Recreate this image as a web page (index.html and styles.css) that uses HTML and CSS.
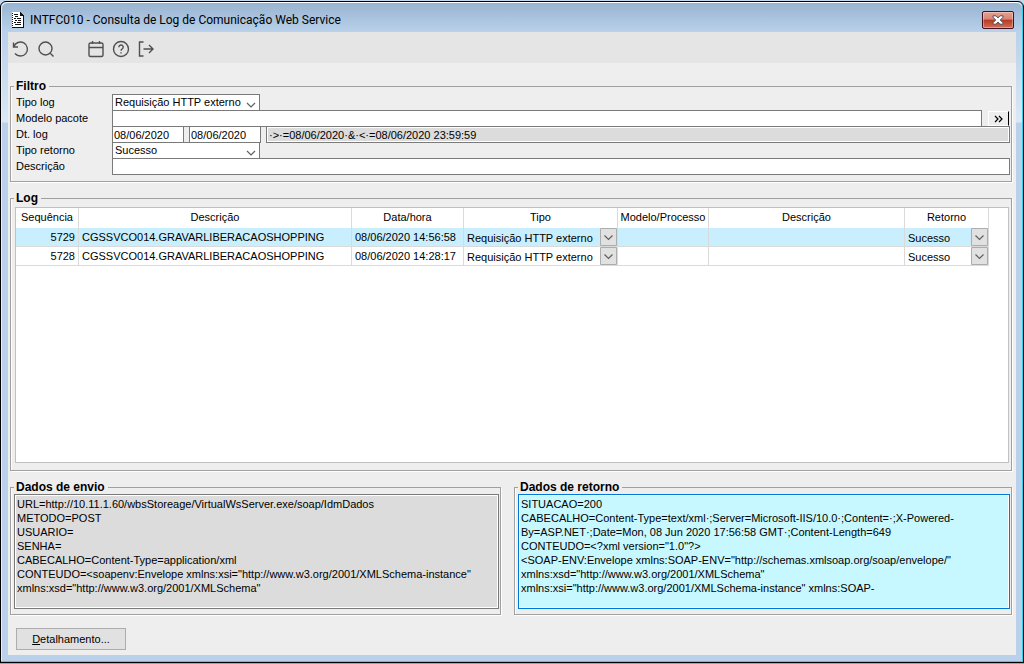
FILE: index.html
```html
<!DOCTYPE html>
<html lang="pt-BR">
<head>
    <meta charset="UTF-8">
    <meta name="viewport" content="width=device-width, initial-scale=1.0">
    <title>INTFC010 - Consulta de Log de Comunicação Web Service</title>
    <link rel="stylesheet" href="styles.css">
</head>
<body>
    <div class="window">
        <header class="titlebar">
            <svg class="app-icon" viewBox="0 0 12 16" width="12" height="16" shape-rendering="crispEdges">
                <path d="M0 0h9v1h1v1h1v1h1v13H0z" fill="#111"/>
                <path d="M0 0h8v4h3v11H0z" fill="#fff"/>
                <path d="M0 1h1v1H0zM0 3h1v1H0zM0 5h1v1H0zM0 7h1v1H0zM0 9h1v1H0zM0 11h1v1H0zM0 13h1v1H0zM2 2h4v1H2zM3 4h3v1H3zM2 6h2v1H2zM5 6h4v1H5zM3 8h2v1H3zM6 8h3v1H6zM2 10h2v1H2zM5 10h4v1H5zM3 12h6v1H3z" fill="#111"/>
            </svg>
            <h1>INTFC010 - Consulta de Log de Comunicação Web Service</h1>
            <button type="button" class="close" aria-label="Fechar">
                <svg viewBox="0 0 12 10" width="12" height="10">
                    <path d="M1 .8h3l2 2.2L8 .8h3v1.400L8.300 5 11 7.800v1.400H8L6 7 4 9.200H1V7.800L3.700 5 1 2.200z" fill="#fff" stroke="#4e5260" stroke-width="1"/>
                </svg>
            </button>
        </header>

        <main class="client">
            <!-- Barra de ferramentas -->
            <nav class="toolbar">
                <button type="button" aria-label="Atualizar">
                    <svg viewBox="0 0 18 18"><path d="M1.500 2.500v4.500h4.500M1.800 6.800A7 7 0 1 1 3 13.500"/></svg>
                </button>
                <button type="button" aria-label="Pesquisar">
                    <svg viewBox="0 0 18 18"><circle cx="8.500" cy="8.500" r="6.500"/><path d="M13.200 13.200l3.300 3.300"/></svg>
                </button>
                <span class="separator"></span>
                <button type="button" aria-label="Calendário">
                    <svg viewBox="0 0 18 18"><rect x="2" y="3" width="14" height="13.500" rx="1.500"/><path d="M2 7.500h14M5.500 1v3M12.500 1v3"/></svg>
                </button>
                <button type="button" aria-label="Ajuda">
                    <svg viewBox="0 0 18 18"><circle cx="9" cy="9" r="7.500"/><path d="M6.800 7.200a2.200 2.200 0 1 1 3.200 2c-.7.400-1 .7-1 1.600M9 12.200v1.200"/></svg>
                </button>
                <button type="button" aria-label="Sair">
                    <svg viewBox="0 0 18 18"><path d="M6.500 2h-4v14h4M6.500 9h9.500M12 5l4 4-4 4"/></svg>
                </button>
            </nav>

            <!-- Filtro -->
            <fieldset class="group filter">
                <legend>Filtro</legend>
                <label for="tipo-log">Tipo log</label>
                <div class="line">
                    <select id="tipo-log" class="field combo">
                        <option>Requisição HTTP externo</option>
                    </select>
                </div>
                <label for="modelo">Modelo pacote</label>
                <div class="line">
                    <input type="text" id="modelo" class="field grow">
                    <button type="button" class="more" aria-label="Selecionar">
                        <svg viewBox="0 0 9 8" width="9" height="8"><path d="M1 1l3 3-3 3M5 1l3 3-3 3"/></svg>
                    </button>
                </div>
                <label for="dt-inicio">Dt. log</label>
                <div class="line dates">
                    <input type="text" id="dt-inicio" class="field date" value="08/06/2020">
                    <input type="text" class="field date" value="08/06/2020" aria-label="Dt. log final">
                    <input type="text" class="field grow expression" value="·&gt;·=08/06/2020·&amp;·&lt;·=08/06/2020 23:59:59" aria-label="Expressão" readonly>
                </div>
                <label for="tipo-retorno">Tipo retorno</label>
                <div class="line">
                    <select id="tipo-retorno" class="field combo">
                        <option>Sucesso</option>
                    </select>
                </div>
                <label for="descricao">Descrição</label>
                <div class="line">
                    <input type="text" id="descricao" class="field grow">
                </div>
            </fieldset>

            <!-- Log -->
            <fieldset class="group log">
                <legend>Log</legend>
                <div class="grid">
                    <table>
                        <colgroup>
                            <col class="c-seq"><col class="c-name"><col class="c-date"><col class="c-type">
                            <col class="c-model"><col class="c-desc"><col class="c-ret">
                        </colgroup>
                        <thead>
                            <tr>
                                <th>Sequência</th>
                                <th>Descrição</th>
                                <th>Data/hora</th>
                                <th>Tipo</th>
                                <th>Modelo/Processo</th>
                                <th>Descrição</th>
                                <th>Retorno</th>
                            </tr>
                        </thead>
                        <tbody>
                            <tr class="selected">
                                <td class="num">5729</td>
                                <td>CGSSVCO014.GRAVARLIBERACAOSHOPPING</td>
                                <td>08/06/2020 14:56:58</td>
                                <td class="pick"><select aria-label="Tipo"><option>Requisição HTTP externo</option></select></td>
                                <td></td>
                                <td></td>
                                <td class="pick"><select aria-label="Retorno"><option>Sucesso</option></select></td>
                            </tr>
                            <tr>
                                <td class="num">5728</td>
                                <td>CGSSVCO014.GRAVARLIBERACAOSHOPPING</td>
                                <td>08/06/2020 14:28:17</td>
                                <td class="pick"><select aria-label="Tipo"><option>Requisição HTTP externo</option></select></td>
                                <td></td>
                                <td></td>
                                <td class="pick"><select aria-label="Retorno"><option>Sucesso</option></select></td>
                            </tr>
                        </tbody>
                    </table>
                </div>
            </fieldset>

            <!-- Dados enviados e recebidos -->
            <div class="payloads">
                <fieldset class="group">
                    <legend>Dados de envio</legend>
                    <textarea class="payload" aria-label="Dados de envio" readonly>URL=http://10.11.1.60/wbsStoreage/VirtualWsServer.exe/soap/IdmDados
METODO=POST
USUARIO=
SENHA=
CABECALHO=Content-Type=application/xml
CONTEUDO=&lt;soapenv:Envelope xmlns:xsi="http://www.w3.org/2001/XMLSchema-instance"
xmlns:xsd="http://www.w3.org/2001/XMLSchema"</textarea>
                </fieldset>
                <fieldset class="group">
                    <legend>Dados de retorno</legend>
                    <textarea class="payload active" aria-label="Dados de retorno">SITUACAO=200
CABECALHO=Content-Type=text/xml·;Server=Microsoft-IIS/10.0·;Content=·;X-Powered-
By=ASP.NET·;Date=Mon, 08 Jun 2020 17:56:58 GMT·;Content-Length=649
CONTEUDO=&lt;?xml version="1.0"?&gt;
&lt;SOAP-ENV:Envelope xmlns:SOAP-ENV="http://schemas.xmlsoap.org/soap/envelope/"
xmlns:xsd="http://www.w3.org/2001/XMLSchema"
xmlns:xsi="http://www.w3.org/2001/XMLSchema-instance" xmlns:SOAP-</textarea>
                </fieldset>
            </div>

            <footer class="actions">
                <button type="button" class="btn"><span class="key">D</span>etalhamento...</button>
            </footer>
        </main>
    </div>
</body>
</html>
```

FILE: styles.css
```css
:root {
    --frame: #b9d1ea;
    --face: #eeeeee;
    --toolbar: #e5e5e5;
    --line: #a0a0a0;
    --field-line: #7a7a7a;
    --grid-line: #dadada;
    --selected: #c9effe;
    --readonly: #dcdcdc;
    --focus: #0078d7;
    --focus-bg: #c8f8ff;
}

* {
    box-sizing: border-box;
    margin: 0;
    padding: 0;
}

body {
    display: flex;
    height: 100vh;
    padding: 1px 0;
    background: linear-gradient(#c4d8ee 6px, #000 6px, #000 calc(100% - 1px), #9aa5ab calc(100% - 1px));
    color: #000;
    font-family: "Liberation Sans", Arial, sans-serif;
    font-size: 11px;
    line-height: 14px;
    overflow: hidden;
}

input,
select,
textarea,
button {
    font: inherit;
    color: inherit;
    border-radius: 0;
}

svg {
    display: block;
}

/* Window */
.window {
    flex: 1;
    min-width: 0;
    display: flex;
    flex-direction: column;
    padding: 0 7px 7px;
    background: linear-gradient(var(--frame) 30px, #dbe8f6 120px, var(--frame) 121px);
    border: 1px solid #000;
    border-radius: 6px 6px 0 0;
    box-shadow: inset -1px -1px 0 #35cfe8, inset 1px 0 0 #e6f0fa;
}

.titlebar {
    flex: none;
    display: flex;
    align-items: center;
    gap: 6px;
    height: 30px;
    margin: 0 -6px;
    padding: 5px 8px 0 10px;
    background: linear-gradient(#99b4d1, #b9d1ea);
    border-top: 1px solid #fff;
    border-radius: 6px 6px 0 0;
}

.titlebar h1 {
    flex: 1;
    font-family: Roboto, "Segoe UI", sans-serif;
    font-size: 12px;
    font-weight: 400;
}

.close {
    display: flex;
    align-items: center;
    justify-content: center;
    width: 32px;
    height: 18px;
    border: 1px solid #43101d;
    border-radius: 2px;
    background: linear-gradient(#e6a090, #d98373 45%, #b8391f 50%, #d0705a);
    box-shadow: inset 0 0 0 1px rgba(255, 255, 255, 0.35);
}

.client {
    flex: 1;
    display: flex;
    flex-direction: column;
    min-height: 0;
    background: var(--face);
}

/* Toolbar */
.toolbar {
    flex: none;
    display: flex;
    align-items: center;
    gap: 7px;
    height: 31px;
    padding: 2px 4px 0;
    background: var(--toolbar);
}

.toolbar button {
    border: none;
    background: none;
}

.toolbar svg {
    width: 18px;
    height: 18px;
    fill: none;
    stroke: #505050;
    stroke-width: 1.4;
}

.separator {
    width: 18px;
}

/* Group boxes */
.group {
    --inset: 3px;
    min-width: 0;
    margin: 0 4px 0 2px;
    padding: 0 1px 5px var(--inset);
    border: 1px solid var(--line);
    box-shadow: 1px 1px 0 #fff, inset 1px 0 0 #fff;
}

.group legend {
    margin-left: calc(3px - var(--inset));
    padding: 0 3px 0 2px;
    font-size: 12px;
    font-weight: 700;
    line-height: 14px;
}

/* Filter */
.filter {
    --inset: 5px;
    display: grid;
    grid-template-columns: 96px minmax(0, 1fr);
    grid-auto-rows: 16px;
    margin-top: 16px;
    padding: 1px 1px 7px var(--inset);
}

.filter label {
    padding-top: 1px;
}

.line {
    display: flex;
    align-items: flex-start;
}

.field {
    height: 17px;
    padding: 0 2px;
    border: 1px solid var(--field-line);
    background: #fff;
    outline: none;
}

.grow {
    flex: 1;
    min-width: 0;
}

.combo,
.pick select {
    appearance: none;
    background-repeat: no-repeat;
}

.combo {
    width: 148px;
    padding-bottom: 1px;
    background-image: url("data:image/svg+xml,%3Csvg xmlns='http://www.w3.org/2000/svg' width='10' height='6'%3E%3Cpath d='M1 1l4 4 4-4' fill='none' stroke='%23606060' stroke-width='1.2'/%3E%3C/svg%3E");
    background-position: right 3px bottom 2px;
}

.dates {
    gap: 5px;
}

.date {
    width: 72px;
    padding: 0 1px;
}

.expression {
    background: var(--readonly);
    box-shadow: inset 0 0 0 1px #fff;
}

.more {
    display: flex;
    align-items: center;
    justify-content: center;
    width: 21px;
    height: 15px;
    margin: 1px 1px 0 6px;
    border: 1px solid #fff;
    border-right: 1px solid #000;
    background: var(--face);
}

.more svg {
    fill: none;
    stroke: #000;
    stroke-width: 1.2;
}

/* Log grid */
.log {
    --inset: 4px;
    flex: 1;
    display: flex;
    flex-direction: column;
    min-height: 0;
    margin-top: 9px;
    padding: 2px 2px 7px var(--inset);
}

.grid {
    flex: 1;
    min-height: 0;
    border: 1px solid #c0c0c0;
    background: #fff;
    overflow: hidden;
}

.grid table {
    width: calc(100% - 19px);
    border-spacing: 0;
    table-layout: fixed;
}

.c-seq { width: 63px; }
.c-date { width: 112px; }
.c-type { width: 154px; }
.c-model { width: 91px; }
.c-desc { width: 196px; }
.c-ret { width: 84px; }

.grid th {
    height: 20px;
    padding-bottom: 3px;
    border-right: 1px solid var(--grid-line);
    font-weight: 400;
    text-align: center;
    white-space: nowrap;
}

.grid td {
    height: 19px;
    padding: 0 3px 1px;
    border-right: 1px solid var(--grid-line);
    border-bottom: 1px solid var(--grid-line);
    white-space: nowrap;
}

.grid .num {
    text-align: right;
}

.grid .selected {
    background: var(--selected);
}

.grid .pick {
    padding: 0;
}

.pick select {
    display: block;
    width: 100%;
    height: 18px;
    padding: 1px 3px 0;
    border: none;
    background-color: transparent;
    background-image: url("data:image/svg+xml,%3Csvg xmlns='http://www.w3.org/2000/svg' width='17' height='18'%3E%3Cpath d='M.5.5h16v17H.5z' fill='%23e1e1e1' stroke='%23adadad'/%3E%3Cpath d='M4.500 7.500l4 4 4-4' fill='none' stroke='%23606060' stroke-width='1.2'/%3E%3C/svg%3E");
    background-position: right center;
}

/* Payloads */
.payloads {
    flex: none;
    display: grid;
    grid-template-columns: minmax(0, 497fr) minmax(0, 504fr);
    gap: 7px;
    margin-top: 9px;
}

.payload {
    display: block;
    width: 100%;
    height: 115px;
    padding: 2px;
    border: 1px solid var(--field-line);
    background: var(--readonly);
    box-shadow: inset 0 0 0 1px #fff;
    outline: none;
    resize: none;
    overflow: hidden;
}

.payload.active {
    border-color: var(--focus);
    background: var(--focus-bg);
}

.actions {
    flex: none;
    padding: 13px 8px 5px;
}

.btn {
    width: 110px;
    height: 22px;
    border: 1px solid #adadad;
    background: #e1e1e1;
}

.key {
    text-decoration: underline;
}
```
